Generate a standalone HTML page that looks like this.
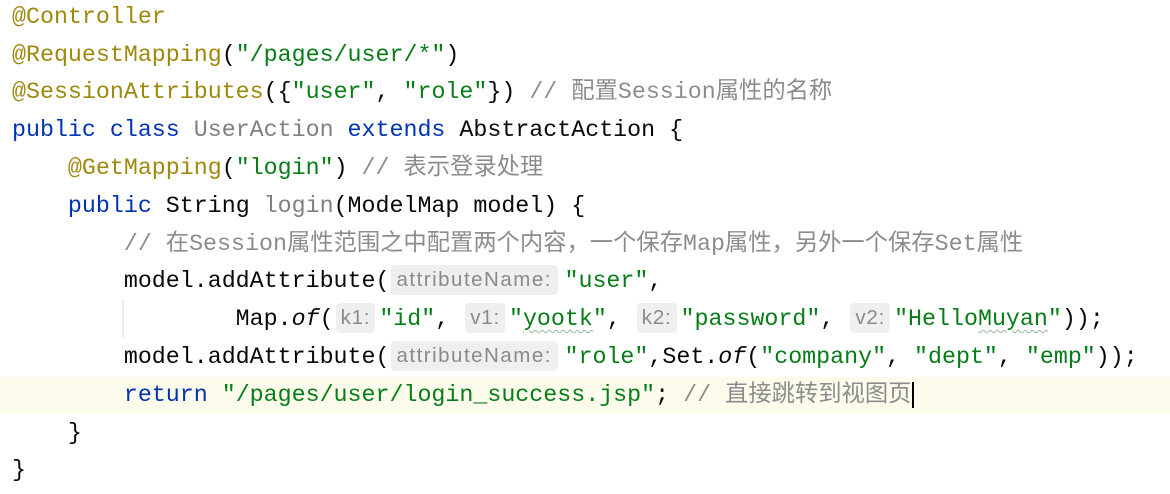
<!DOCTYPE html>
<html><head><meta charset="utf-8"><style>
body{margin:0;width:1170px;height:494px;background:#fff;overflow:hidden;position:relative;font-family:"Liberation Mono","Noto Sans CJK SC",monospace;font-size:23.3px;color:#080808}
.l{position:absolute;left:12px;height:38px;line-height:38px;white-space:pre}
.a{color:#9e880d}.s{color:#067d17}.k{color:#0033b3}.g{color:#808080}.c{color:#8c8c8c}
.h{display:inline-block;background:#efefef;color:#8a8a8a;font-family:"Liberation Sans",sans-serif;font-size:20.5px;letter-spacing:0.8px;line-height:30px;padding:0 5px;border-radius:4px;margin:0 4px 0 2px;vertical-align:1px}
.hw{width:157px;letter-spacing:1.5px;margin-right:6px}
.i{font-style:italic}
.w{text-decoration:underline wavy #9ab89a 1px;text-underline-offset:4px}
.cur{position:absolute;left:0;width:1170px;top:377px;height:37px;background:#fcfbec}
</style></head><body>
<div class="cur"></div>
<div style="position:absolute;left:122px;top:300px;width:2px;height:38px;background:#ececec"></div>
<div class="l" style="top:-2px"><span class="a">@Controller</span></div>
<div class="l" style="top:36px"><span class="a">@RequestMapping</span>(<span class="s">"/pages/user/*"</span>)</div>
<div class="l" style="top:73px"><span class="a">@SessionAttributes</span>({<span class="s">"user"</span>, <span class="s">"role"</span>}) <span class="c">// 配置Session属性的名称</span></div>
<div class="l" style="top:111px"><span class="k">public class</span> <span class="g">UserAction</span> <span class="k">extends</span> AbstractAction {</div>
<div class="l" style="top:149px">    <span class="a">@GetMapping</span>(<span class="s">"login"</span>) <span class="c">// 表示登录处理</span></div>
<div class="l" style="top:187px">    <span class="k">public</span> String <span class="g">login</span>(ModelMap model) {</div>
<div class="l" style="top:225px">        <span class="c">// 在Session属性范围之中配置两个内容，一个保存Map属性，另外一个保存Set属性</span></div>
<div class="l" style="top:262px">        model.addAttribute(<span class="h hw">attributeName:</span><span class="s">"user"</span>,</div>
<div class="l" style="top:300px">                Map.<span class="i">of</span>(<span class="h">k1:</span><span class="s">"id"</span>, <span class="h">v1:</span><span class="s">"<span class="w">yootk</span>"</span>, <span class="h">k2:</span><span class="s">"password"</span>, <span class="h">v2:</span><span class="s">"Hello<span class="w">Muyan</span>"</span>));</div>
<div class="l" style="top:338px">        model.addAttribute(<span class="h hw">attributeName:</span><span class="s">"role"</span>,Set.<span class="i">of</span>(<span class="s">"company"</span>, <span class="s">"dept"</span>, <span class="s">"emp"</span>));</div>
<div class="l" style="top:376px">        <span class="k">return</span> <span class="s">"/pages/user/login_success.jsp"</span>; <span class="c">// 直接跳转到视图页</span><span style="border-left:2px solid #000;margin-left:1px"></span></div>
<div class="l" style="top:414px">    }</div>
<div class="l" style="top:451px">}</div>
</body></html>
